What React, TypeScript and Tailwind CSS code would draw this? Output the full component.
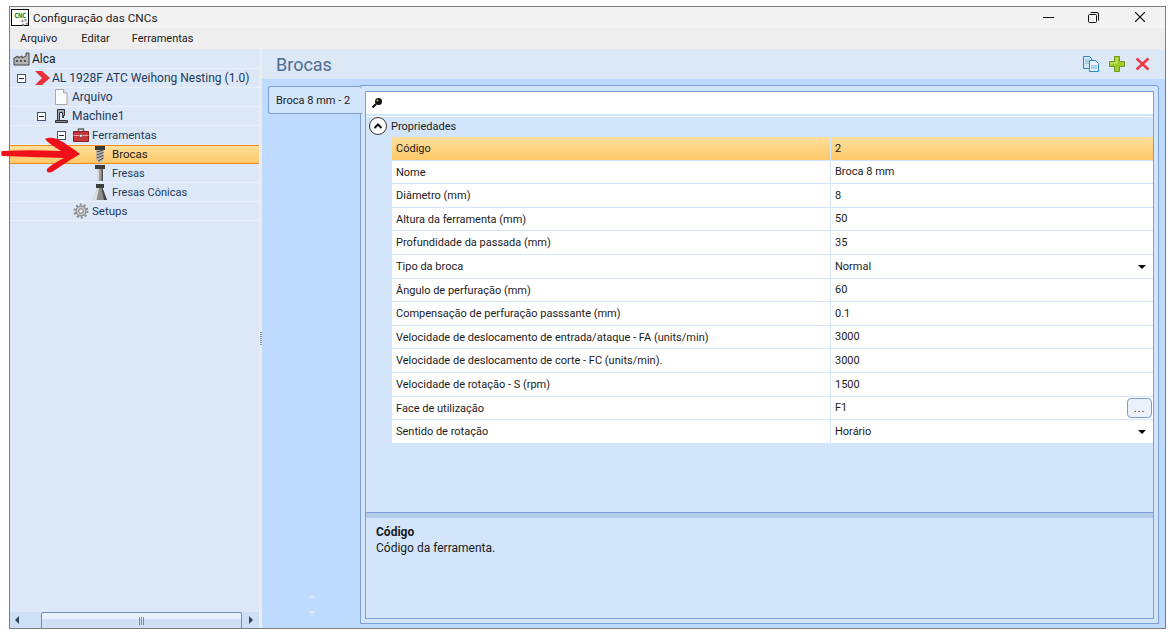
import { X } from "lucide-react"

const properties = [
  { name: "Código", value: "2", selected: true },
  { name: "Nome", value: "Broca 8 mm" },
  { name: "Diâmetro (mm)", value: "8" },
  { name: "Altura da ferramenta (mm)", value: "50" },
  { name: "Profundidade da passada (mm)", value: "35" },
  { name: "Tipo da broca", value: "Normal", dropdown: true },
  { name: "Ângulo de perfuração (mm)", value: "60" },
  { name: "Compensação de perfuração passsante (mm)", value: "0.1" },
  { name: "Velocidade de deslocamento de entrada/ataque - FA (units/min)", value: "3000" },
  { name: "Velocidade de deslocamento de corte - FC (units/min).", value: "3000" },
  { name: "Velocidade de rotação - S (rpm)", value: "1500" },
  { name: "Face de utilização", value: "F1", browse: true },
  { name: "Sentido de rotação", value: "Horário", dropdown: true },
]

function Expander() {
  return (
    <span className="flex h-[9px] w-[9px] items-center justify-center border border-[#44546a] bg-white">
      <span className="h-px w-[5px] bg-[#1e2d44]" />
    </span>
  )
}

function FactoryIcon() {
  return (
    <svg width="18" height="14" viewBox="0 0 18 14">
      <path d="M1 13V6l4-2v2l4-2v2l4-2V1h3v12z" fill="#b4b4b4" stroke="#444" strokeWidth="1" />
      <path d="M3 9h2M7 9h2M11 9h2" stroke="#333" strokeWidth="1.5" />
    </svg>
  )
}

function DocIcon() {
  return (
    <svg width="14" height="16" viewBox="0 0 14 16">
      <path d="M1.5.5h8l3.5 3.5v11.500H1.500z" fill="#fafafa" stroke="#a8a8a8" />
      <path d="M9.500.5V4H13" fill="#e4e4e4" stroke="#a8a8a8" />
    </svg>
  )
}

function MachineIcon() {
  return (
    <svg width="16" height="15" viewBox="0 0 16 15">
      <path d="M3.500.5h7v6h-2v-3h-3v8h-2z" fill="#a4a9b0" stroke="#333" />
      <path d="M1.500 11.500h12v2h-12z" fill="#8a8a8a" stroke="#333" />
      <path d="M8 7h2v2H8z" fill="#444" />
    </svg>
  )
}

function ToolboxIcon() {
  return (
    <svg width="16" height="14" viewBox="0 0 16 14">
      <path d="M5.500 3V1h5v2" fill="none" stroke="#666" strokeWidth="1.400" />
      <path d="M.5 3.500h15v10H.5z" fill="#c9363c" stroke="#8a1f25" />
      <path d="M.5 7.500h15" stroke="#f0a0a0" />
      <path d="M6.500 6.500h3v2.500h-3z" fill="#e8e8e8" stroke="#555" strokeWidth=".6" />
    </svg>
  )
}

function DrillIcon() {
  return (
    <svg width="10" height="17" viewBox="0 0 10 17">
      <path d="M0 0h10v4H0z" fill="#3c3c3c" />
      <path d="M1.500 4h7v9l-3 4h-1l-3-4z" fill="#b8b8b8" />
      <path d="M1.500 6l7-2M1.500 9l7-2.500M1.500 12l7-2.500M3 15l5.500-3" stroke="#444" strokeWidth="1" />
    </svg>
  )
}

function MillIcon() {
  return (
    <svg width="10" height="16" viewBox="0 0 10 16">
      <path d="M0 0h10v4H0z" fill="#3c3c3c" />
      <path d="M2 4h6v12H2z" fill="#a0a0a0" />
      <path d="M2 4h2v12H2z" fill="#d8d8d8" />
      <path d="M6.500 4H8v12H6.500z" fill="#555" />
    </svg>
  )
}

function ConicalIcon() {
  return (
    <svg width="16" height="16" viewBox="0 0 16 16">
      <path d="M4 0h8v4H4z" fill="#3c3c3c" />
      <path d="M5.500 4h5L15 16H1z" fill="#8c8c8c" />
      <path d="M5.500 4h1.500L4.500 16H1z" fill="#e0e0e0" />
      <path d="M9.500 4h1L15 16h-3z" fill="#444" />
    </svg>
  )
}

function GearIcon() {
  return (
    <svg width="16" height="16" viewBox="0 0 16 16">
      <circle cx="8" cy="8" r="5" fill="#c8c8c8" stroke="#777" />
      <circle cx="8" cy="8" r="6.500" fill="none" stroke="#888" strokeWidth="2" strokeDasharray="2 2.080" />
      <circle cx="8" cy="8" r="2.300" fill="#eeeeee" stroke="#777" />
    </svg>
  )
}

function TreeRow({ indent, children, selected }: { indent: string; children: React.ReactNode; selected?: boolean }) {
  return (
    <div
      className={`flex h-[19px] items-center border-b ${indent} ${
        selected
          ? "border-y-[#f08c1e] border-t bg-gradient-to-b from-[#ffe09c] to-[#fdc868]"
          : "border-b-[#e9f0fa]"
      }`}
    >
      {children}
    </div>
  )
}

export default function App() {
  return (
    <div className="h-[632px] w-[1173px] overflow-hidden bg-white pb-[3px] pl-[9px] pr-[7px] pt-[6px] font-['Roboto',sans-serif] text-[11px] text-[#1b1b1b]">
      <div className="relative flex h-full flex-col border border-[#7e7e7e]">
        {/* Title bar */}
        <div className="flex h-[21px] items-center bg-[#f3f3f3] pl-px">
          <div className="relative flex h-[17px] w-[18px] items-start justify-center border border-black bg-white pt-[2px] font-['DejaVu_Sans_Mono',monospace] text-[7px] font-bold leading-[8px] tracking-[-0.4px] text-[#0a8a2a]">
            CNC
            <span className="absolute bottom-[-1px] right-0 h-[7px] w-[7px] rounded-full border-2 border-dotted border-[#888]" />
          </div>
          <span className="ml-[4px] pt-[2px] text-[11.750px]">Configuração das CNCs</span>
          <div className="ml-auto flex items-center pr-[16px]">
            <span className="h-px w-[11px] bg-[#111]" />
            <svg className="ml-[34px]" width="11" height="11" viewBox="0 0 11 11" fill="none" stroke="#111">
              <rect x=".5" y="2.500" width="8" height="8" rx="1" />
              <path d="M2.500.5h6.500a1.500 1.500 0 0 1 1.500 1.500v6.500" />
            </svg>
            <X className="-mt-px ml-[32px]" size={18} strokeWidth={1.100} absoluteStrokeWidth />
          </div>
        </div>

        {/* Menu */}
        <div className="flex h-[21px] items-center gap-[22px] bg-[#eeeeee] pl-[10px] pt-[2px]">
          <span className="mr-[2px]">Arquivo</span>
          <span>Editar</span>
          <span>Ferramentas</span>
        </div>

        <div className="flex min-h-0 flex-1">
          {/* Tree panel */}
          <div className="flex w-[249px] flex-col bg-[#dce8f7]">
            <div className="flex-1 pt-px text-[12px] text-[#1e395b]">
              <TreeRow indent="pl-[3px]">
                <FactoryIcon />
                <span className="ml-px text-[#1b1b1b]">Alca</span>
              </TreeRow>
              <TreeRow indent="pl-[7px]">
                <Expander />
                <svg className="ml-[9px]" width="16" height="16" viewBox="0 0 16 16">
                  <path d="M0 1h7l8 7-8 7H0l7-7z" fill="#e8323c" />
                </svg>
                <span className="ml-px">AL 1928F ATC Weihong Nesting (1.0)</span>
              </TreeRow>
              <TreeRow indent="pl-[44px]">
                <DocIcon />
                <span className="ml-[4px]">Arquivo</span>
              </TreeRow>
              <TreeRow indent="pl-[27px]">
                <Expander />
                <span className="ml-[8px] flex">
                  <MachineIcon />
                </span>
                <span className="ml-[2px]">Machine1</span>
              </TreeRow>
              <TreeRow indent="pl-[47px]">
                <Expander />
                <span className="ml-[7px] flex">
                  <ToolboxIcon />
                </span>
                <span className="ml-[3px] pt-px text-[11.500px]">Ferramentas</span>
              </TreeRow>
              <TreeRow indent="pl-[85px]" selected>
                <DrillIcon />
                <span className="ml-[7px] text-[11.500px] text-[#1b1b1b]">Brocas</span>
              </TreeRow>
              <TreeRow indent="pl-[85px]">
                <MillIcon />
                <span className="ml-[7px] pt-[2px] text-[11px]">Fresas</span>
              </TreeRow>
              <TreeRow indent="pl-[82px]">
                <ConicalIcon />
                <span className="ml-[4px] pt-[2px] text-[11px]">Fresas Cônicas</span>
              </TreeRow>
              <TreeRow indent="pl-[63px]">
                <GearIcon />
                <span className="ml-[3px] pt-px text-[11.500px]">Setups</span>
              </TreeRow>
            </div>
            {/* Horizontal scrollbar */}
            <div className="flex h-[16px] items-stretch bg-[#cddff5]">
              <div className="flex w-[31px] items-center pl-[5px]">
                <span className="h-0 w-0 border-y-[4px] border-r-[4px] border-y-transparent border-r-[#34435c]" />
              </div>
              <div className="flex w-[201px] items-center justify-center rounded-t-[2px] border border-b-0 border-[#6f8fb5] bg-gradient-to-b from-[#e8f0fb] from-40% to-[#cfe0f5] to-40%">
                <span className="h-[8px] w-[5px] border-x border-[#6f8fb5] bg-[linear-gradient(#6f8fb5,#6f8fb5)] bg-[length:1px_100%] bg-center bg-no-repeat" />
              </div>
              <div className="flex flex-1 items-center pl-[7px]">
                <span className="h-0 w-0 border-y-[4px] border-l-[4px] border-y-transparent border-l-[#34435c]" />
              </div>
            </div>
          </div>

          {/* Splitter */}
          <div className="flex w-[3px] flex-col items-center justify-center gap-px bg-[#ececec]">
            {[0, 1, 2, 3, 4, 5, 6].map((i) => (
              <span key={i} className="h-px w-[2px] bg-[#7d8ca0]" />
            ))}
          </div>

          {/* Right side */}
          <div className="flex flex-1 flex-col bg-[#bfdaff]">
            <div className="flex h-[30px] items-center bg-[#dde8f6] pl-[14px] pr-[15px]">
              <span className="text-[18px] text-[#4e6d92]">Brocas</span>
              <div className="ml-auto flex items-center">
                <svg width="16" height="16" viewBox="0 0 16 16">
                  <path d="M.5.5h6l2 2v10h-8z" fill="#cfe6f5" stroke="#2a86c8" />
                  <path d="M6.500 4.500h6l3 3v8h-9z" fill="#e4f1fa" stroke="#2a86c8" />
                  <path d="M2 3h4v5H2zM8 9h6v4H8z" fill="#a9cfe6" />
                </svg>
                <svg className="ml-[10px]" width="16" height="16" viewBox="0 0 16 16">
                  <path d="M5.500.5h5v5h5v5h-5v5h-5v-5h-5v-5h5z" fill="#9ccb2c" stroke="#6f9a1a" />
                  <path d="M6.500 2h1.500v5H2v1.500" fill="none" stroke="#d2ea80" />
                </svg>
                <svg className="ml-[10px]" width="15" height="14" viewBox="0 0 15 14">
                  <path d="M1.500 1.500l12 11M13.500 1.500l-12 11" stroke="#f0384a" strokeWidth="2.600" />
                </svg>
              </div>
            </div>

            <div className="flex min-h-0 flex-1 pb-[4px] pr-[6px] pt-[6px]">
              {/* Tab strip */}
              <div className="flex w-[99px] flex-col pl-[6px] pt-px">
                <div className="relative z-10 -mr-px flex h-[28px] items-center rounded-l-[3px] rounded-tr-[3px] border border-r-0 border-[#7aa0d4] bg-[#d3e5fb] pl-[7px] pt-[2px]">
                  Broca 8 mm - 2
                </div>
                <div className="mt-auto flex flex-col items-center gap-[13px] pb-[9px] pr-[6px]">
                  <span className="h-0 w-0 border-x-[4px] border-b-[4px] border-x-transparent border-b-[#d8e8fc]" />
                  <span className="h-0 w-0 border-x-[4px] border-t-[4px] border-x-transparent border-t-[#d8e8fc]" />
                </div>
              </div>

              {/* Property page */}
              <div className="-ml-px flex flex-1 rounded-tr-[3px] border border-[#7aa0d4] bg-[#d3e5fb] pb-[4px] pl-[4px] pr-[4px] pt-[5px]">
                <div className="flex flex-1 flex-col border border-[#7aa0d4]">
                  <div className="flex h-[22px] shrink-0 items-center bg-white pl-[5px]">
                    <svg width="12" height="12" viewBox="0 0 12 12">
                      <circle cx="7.500" cy="4.500" r="3.500" fill="#111" />
                      <circle cx="6.500" cy="3.500" r="1" fill="#e8b24a" />
                      <path d="M5 7L1.500 10.500" stroke="#111" strokeWidth="2.200" />
                    </svg>
                  </div>

                  <div className="mt-[2px] flex min-h-0 flex-1 flex-col rounded-t-[3px] border-t border-white bg-[#d3e5fb]">
                    <div className="flex h-[20px] shrink-0 items-center pb-[2px] pl-[3px]">
                      <span className="flex h-[18px] w-[18px] items-center justify-center rounded-full border border-[#333] bg-white">
                        <svg width="10" height="8" viewBox="0 0 10 8" fill="none" stroke="#111" strokeWidth="2">
                          <path d="M1.500 6L5 2.500 8.500 6" />
                        </svg>
                      </span>
                      <span className="ml-[4px] pt-[2px]">Propriedades</span>
                    </div>
                    <div className="ml-[26px]">
                      {properties.map((p) => (
                        <div
                          key={p.name}
                          className={`flex h-[23.62px] items-center border-b border-[#d3e5fb] ${
                            p.selected ? "bg-gradient-to-b from-[#ffe09c] to-[#fdc868]" : "bg-white"
                          }`}
                        >
                          <span className="w-[439px] shrink-0 self-stretch border-r border-[#d3e5fb] pl-[4px] leading-[23px]">
                            {p.name}
                          </span>
                          <span className="flex flex-1 items-center pl-[4px] pr-px pt-px">
                            {p.value}
                            {p.dropdown && (
                              <span className="ml-auto mr-[6px] h-0 w-0 border-x-[4px] border-t-[4px] border-x-transparent border-t-black" />
                            )}
                            {p.browse && (
                              <span className="-mt-px ml-auto flex h-[20px] w-[25px] items-center justify-center rounded-[4px] border border-[#7f9cc0] bg-[#eaf1fb] text-[11px] leading-none tracking-[1px]">
                                ...
                              </span>
                            )}
                          </span>
                        </div>
                      ))}
                    </div>
                  </div>

                  {/* Help area */}
                  <div className="h-[106px] shrink-0 border-t-[1px] border-[#7aa0d4] bg-[#d3e5fb]">
                    <div className="h-[5px] bg-[#b3cbe9]" />
                    <div className="pl-[10px] pt-[6px] text-[12px] leading-[16px]">
                      <div className="font-bold">Código</div>
                      <div>Código da ferramenta.</div>
                    </div>
                  </div>
                </div>
              </div>
            </div>
          </div>
        </div>

        {/* Red annotation arrow */}
        <svg className="absolute left-[-9px] top-[127px]" width="84" height="42" viewBox="0 0 84 42">
          <path
            d="M1 17C20 16 40 16 60 17 54 13 47 9 44 5 48 3 52 4 56 5 65 9 72 15 79 20 72 24 60 32 51 38 47 39 45 38 46 35 50 31 57 27 63 24 40 23 20 23 1 22 0 21 0 18 1 17z"
            fill="#f0101a"
          />
        </svg>
      </div>
    </div>
  )
}
